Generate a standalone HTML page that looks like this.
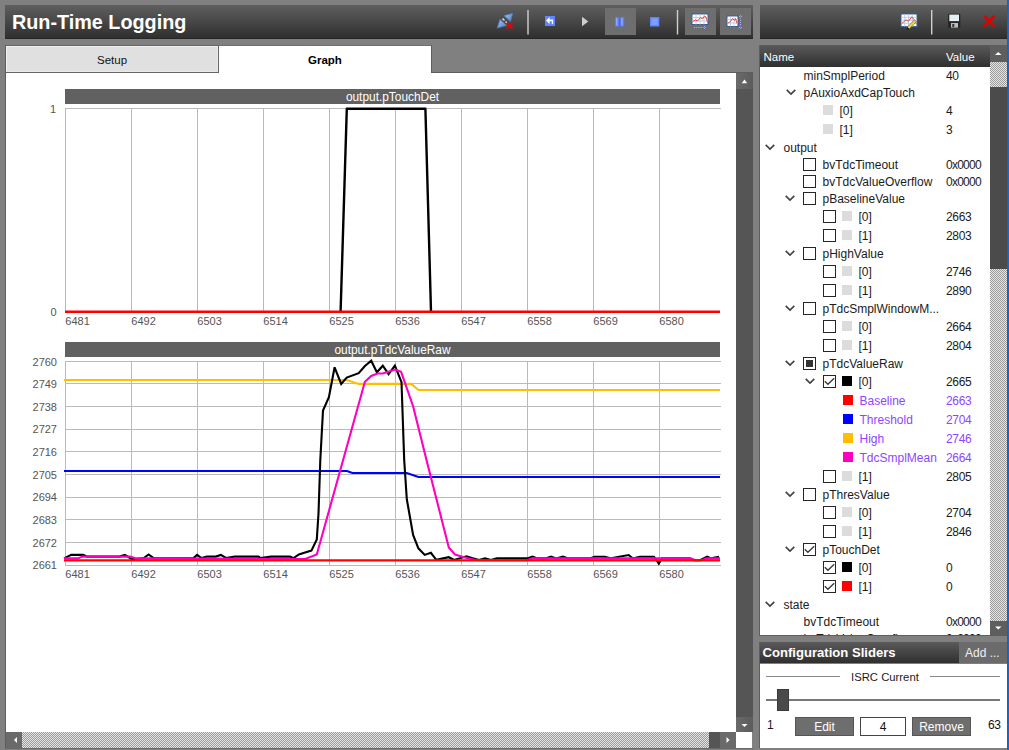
<!DOCTYPE html>
<html><head><meta charset="utf-8">
<style>
*{margin:0;padding:0;box-sizing:border-box}
html,body{width:1009px;height:750px;overflow:hidden;background:#808080;font-family:"Liberation Sans",sans-serif;position:relative}
.a{position:absolute}
.tb{background:linear-gradient(#5f5f5f,#2f2f2f);border-bottom:1px solid #262626}
.t{position:absolute;white-space:nowrap;line-height:1}
.title{left:12px;top:13px;color:#fff;font-weight:bold;font-size:19.8px}
.sep{position:absolute;width:2px;background:#cfcfcf}
.btnbg{position:absolute;background:#6e6e6e}
.tab{position:absolute;top:45px;height:28px;font-size:11.5px;text-align:center;line-height:27px;color:#111}
.lbl{position:absolute;font-size:11px;color:#555;white-space:nowrap;line-height:1}
.hdr{position:absolute;background:#616161;color:#fff;font-size:12.3px;text-align:center;line-height:15px;height:15px}
.r{position:absolute;font-size:12px;color:#1b1b1b;white-space:nowrap;line-height:1}
.v{letter-spacing:-0.35px}
.cb{position:absolute;width:13px;height:13px;border:1px solid #262626;background:#fff}
.sq{position:absolute;width:10px;height:10px;background:#dcdcdc}
.chev{position:absolute;width:11px;height:7px}
.checker{background-color:#c0c0c0;background-image:repeating-conic-gradient(#9a9a9a 0 25%,#e6e6e6 0 50%);background-size:2px 2px}
.pur{color:#8f45ff}
</style></head><body>
<div class="a tb" style="left:5px;top:5px;width:748px;height:34px"></div>
<div class="t title">Run-Time Logging</div>
<div class="a tb" style="left:760px;top:5px;width:247px;height:34px"></div>
<div class="a" style="left:1007px;top:0;width:2px;height:750px;background:linear-gradient(90deg,#2a5a9a,#1a6ad0)"></div>

<svg class="a" style="left:0;top:0" width="1009" height="45" viewBox="0 0 1009 45">
 <defs>
  <linearGradient id="plug" x1="0" y1="0" x2="1" y2="1"><stop offset="0" stop-color="#a8c8ee"/><stop offset="1" stop-color="#4f7fc0"/></linearGradient>
 </defs>
 <!-- disconnect plug -->
 <g>
  <path d="M504 15.6 L512.6 13.4 L510.4 21.6 z" fill="url(#plug)" stroke="#4d7cc2" stroke-width="0.9" stroke-linejoin="round"/>
  <path d="M500 19.4 L506.6 25.4 L497.2 28 z" fill="url(#plug)" stroke="#4d7cc2" stroke-width="0.9" stroke-linejoin="round"/>
  <path d="M502.5 18.5 L504.5 20.5 M505.5 21.5 L507.3 23.3" stroke="#d8d8d8" stroke-width="1.6"/>
  <path d="M506.6 22.8 L512.6 28.6 M512.6 22.8 L506.6 28.6" stroke="#e8000c" stroke-width="2.1"/>
 </g>
 <rect x="527.3" y="10" width="1.4" height="24.5" fill="#d0d0d0"/>
 <!-- back icon -->
 <rect x="545" y="16" width="10" height="10" fill="#5f86ff"/>
 <path d="M546 20.4 L549.6 17 V19.6 H553.1 V23.9 H551.8 V21.3 H549.6 V23.9 z" fill="#fff"/>
 <!-- play -->
 <path d="M582 16.8 L588.3 21.5 L582 26.3 z" fill="#cfcfcf"/>
 <!-- pause -->
 <rect x="605" y="8" width="31" height="27" fill="#6e6e6e"/>
 <rect x="615" y="17" width="4" height="9.5" fill="#5a7cff"/>
 <rect x="620.2" y="17" width="4" height="9.5" fill="#5a7cff"/>
 <rect x="616" y="18" width="1.5" height="7.5" fill="#8fa8ff"/>
 <rect x="621.2" y="18" width="1.5" height="7.5" fill="#8fa8ff"/>
 <!-- stop -->
 <rect x="650" y="17" width="9.3" height="9.5" fill="#5f86ff"/>
 <rect x="651.5" y="18.5" width="6.3" height="6.5" fill="#7f9fff"/>
 <rect x="676.8" y="10" width="1.4" height="24.5" fill="#d0d0d0"/>
 <!-- chart btn 1 -->
 <rect x="685" y="8" width="31" height="27" fill="#6e6e6e"/>
 <rect x="692" y="14" width="16" height="10.5" fill="#fff" stroke="#3a5c8c" stroke-width="1"/>
 <path d="M696 14v10.5 M700 14v10.5 M704 14v10.5 M692 17.5h16 M692 21h16" stroke="#b8c8e4" stroke-width="0.9"/>
 <path d="M692.5 21.5 l3 -1.5 l2 1 l3 -3.5 l2 1.5 l2 -3 l1.5 1 l1.5 5.5" fill="none" stroke="#e04848" stroke-width="1"/>
 <path d="M694 27.5 h9.5" stroke="#b0b0ff" stroke-width="1.1" stroke-dasharray="1.1,1.1"/>
 <path d="M704 26 l1.5 1.5 l-1.5 1.5" fill="none" stroke="#b0b0ff" stroke-width="0.9"/>
 <!-- chart btn 2 -->
 <rect x="720" y="8" width="31" height="27" fill="#6e6e6e"/>
 <rect x="727" y="16" width="11" height="10.5" fill="#fff" stroke="#3a5c8c" stroke-width="1"/>
 <path d="M730.5 16v10.5 M734 16v10.5 M727 19.5h11 M727 23h11" stroke="#b8c8e4" stroke-width="0.9"/>
 <path d="M727.5 23.5 l3 -2 l2 -3 l2 2 l1 -2 l1.5 5" fill="none" stroke="#e04848" stroke-width="1"/>
 <path d="M740.5 17.5 v9" stroke="#b0b0ff" stroke-width="1.1" stroke-dasharray="1.1,1.1"/>
 <path d="M739 17 l1.5 -1.5 l1.5 1.5 M739 27 l1.5 1.5 l1.5 -1.5" fill="none" stroke="#b0b0ff" stroke-width="0.9"/>
 <!-- right panel icons -->
 <rect x="901" y="14" width="16" height="12.6" fill="#ffffff" stroke="#3a5c8c" stroke-width="1"/>
 <path d="M904.8 14v12.6 M908.5 14v12.6 M912.3 14v12.6 M901 17.3h16 M901 20.3h16 M901 23.3h16" stroke="#b8c8e4" stroke-width="0.9"/>
 <path d="M901.5 23.8 l4.5 -4 l2.5 1.5 l3.2 -4.5 l2.5 3 l2.3 4" fill="none" stroke="#e04848" stroke-width="1"/>
 <path d="M907.3 27.2 l7.2 -7.4 l1.9 1.9 l-7.2 7.4 z" fill="#ecd250" stroke="#6a5a18" stroke-width="0.6"/>
 <path d="M907.3 27.2 l1.9 1.9 l-2.4 0.6 z" fill="#111"/>
 <rect x="931" y="10" width="1.4" height="24.5" fill="#d0d0d0"/>
 <!-- save -->
 <rect x="948" y="13.8" width="12.3" height="14" rx="1" fill="#262626"/>
 <rect x="949.3" y="14.6" width="9.7" height="6.5" fill="#e2f2f2"/>
 <rect x="951" y="23" width="7" height="4.6" fill="#bdbdbd"/>
 <rect x="952.3" y="24" width="2" height="3" fill="#333"/>
 <!-- red x -->
 <path d="M984 16 L994.5 26.5 M994.5 16 L984 26.5" stroke="#e00000" stroke-width="2.6"/>
</svg>

<div class="a" style="left:5px;top:45px;width:214px;height:28px;background:#e0e0e0;border:1px solid #666;box-shadow:inset 1px 1px 0 #f0f0f0,inset -1px -1px 0 #eaeaea"></div>
<div class="t" style="left:97px;top:54.5px;font-size:11.5px;color:#111">Setup</div>
<div class="a" style="left:219px;top:45px;width:212px;height:28px;background:#fff;border-top:1px solid #707070"></div>
<div class="t" style="left:308px;top:54.5px;font-size:11.5px;font-weight:bold;color:#000">Graph</div>
<div class="a" style="left:6px;top:73px;width:730px;height:659px;background:#fff"></div>
<div class="a" style="left:5px;top:45px;width:1px;height:703px;background:#5e5e5e"></div>
<div class="a" style="left:5px;top:748px;width:748px;height:1px;background:#6a6a6a"></div>
<div class="a" style="left:431px;top:72px;width:322px;height:1px;background:#5e5e5e"></div>
<div class="a" style="left:431px;top:45px;width:1px;height:28px;background:#5e5e5e"></div>
<div class="a" style="left:736px;top:73px;width:16.5px;height:659px;background:#555"></div>
<div class="a" style="left:736px;top:73px;width:16.5px;height:16px;background:linear-gradient(90deg,#6a6a6a,#5c5c5c)"></div>
<div class="a" style="left:736px;top:717px;width:16.5px;height:15px;background:linear-gradient(90deg,#6a6a6a,#5c5c5c)"></div>
<svg class="a" style="left:736px;top:73px" width="17" height="659"><path d="M5.7 10.2 L8.45 6.6 L11.2 10.2 z" fill="#fff"/><path d="M5.5 651 L8.5 654 L11.5 651 z" fill="#fff"/></svg>
<div class="a checker" style="left:6px;top:732px;width:730px;height:16px"></div>
<div class="a" style="left:6px;top:732px;width:16px;height:16px;background:#6a6a6a"></div>
<div class="a" style="left:709px;top:732px;width:11px;height:16px;background:#555"></div>
<div class="a" style="left:720px;top:732px;width:16px;height:16px;background:#6a6a6a"></div>
<div class="a" style="left:736px;top:732px;width:16px;height:16px;background:#fff"></div>
<svg class="a" style="left:6px;top:732px" width="730" height="16"><path d="M11 5 L8 8 L11 11 z" fill="#fff"/><path d="M720.5 5 L723.5 8 L720.5 11 z" fill="#fff"/></svg>
<svg class="a" style="left:0;top:0" width="736" height="732" viewBox="0 0 736 732">
<rect x="65" y="89" width="655" height="15" fill="#616161"/>
<path d="M65 108.5 H721" stroke="#bababa" stroke-width="1"/>
<path d="M65.5 108 V312" stroke="#bababa" stroke-width="1"/>
<path d="M131.5 108 V312" stroke="#bababa" stroke-width="1"/>
<path d="M197.5 108 V312" stroke="#bababa" stroke-width="1"/>
<path d="M263.5 108 V312" stroke="#bababa" stroke-width="1"/>
<path d="M329.5 108 V312" stroke="#bababa" stroke-width="1"/>
<path d="M395.5 108 V312" stroke="#bababa" stroke-width="1"/>
<path d="M461.5 108 V312" stroke="#bababa" stroke-width="1"/>
<path d="M527.5 108 V312" stroke="#bababa" stroke-width="1"/>
<path d="M593.5 108 V312" stroke="#bababa" stroke-width="1"/>
<path d="M659.5 108 V312" stroke="#bababa" stroke-width="1"/>
<rect x="65" y="342" width="655" height="15" fill="#616161"/>
<path d="M65 361.5 H721" stroke="#bababa" stroke-width="1"/>
<path d="M65 383.5 H721" stroke="#bababa" stroke-width="1"/>
<path d="M65 406.5 H721" stroke="#bababa" stroke-width="1"/>
<path d="M65 429.5 H721" stroke="#bababa" stroke-width="1"/>
<path d="M65 451.5 H721" stroke="#bababa" stroke-width="1"/>
<path d="M65 474.5 H721" stroke="#bababa" stroke-width="1"/>
<path d="M65 497.5 H721" stroke="#bababa" stroke-width="1"/>
<path d="M65 519.5 H721" stroke="#bababa" stroke-width="1"/>
<path d="M65 542.5 H721" stroke="#bababa" stroke-width="1"/>
<path d="M65 565.5 H721" stroke="#bababa" stroke-width="1"/>
<path d="M65.5 361 V566" stroke="#bababa" stroke-width="1"/>
<path d="M131.5 361 V566" stroke="#bababa" stroke-width="1"/>
<path d="M197.5 361 V566" stroke="#bababa" stroke-width="1"/>
<path d="M263.5 361 V566" stroke="#bababa" stroke-width="1"/>
<path d="M329.5 361 V566" stroke="#bababa" stroke-width="1"/>
<path d="M395.5 361 V566" stroke="#bababa" stroke-width="1"/>
<path d="M461.5 361 V566" stroke="#bababa" stroke-width="1"/>
<path d="M527.5 361 V566" stroke="#bababa" stroke-width="1"/>
<path d="M593.5 361 V566" stroke="#bababa" stroke-width="1"/>
<path d="M659.5 361 V566" stroke="#bababa" stroke-width="1"/>
<polyline points="340.6,311.5 346.8,108.8 425.4,108.8 431,311.5" fill="none" stroke="#000" stroke-width="2.4" stroke-linejoin="round"/>
<path d="M65 311.8 H720" stroke="#ff0000" stroke-width="2.6"/>
<polyline points="64.0,380.0 347.0,380.0 358.7,383.9 411.3,383.9 418.4,390.0 720.0,390.0" fill="none" stroke="#ffbf00" stroke-width="2.1" stroke-linejoin="miter" stroke-miterlimit="3"/>
<polyline points="64.0,471.0 347.0,471.0 352.4,473.0 406.8,473.0 418.4,477.0 720.0,477.0" fill="none" stroke="#0000ff" stroke-width="2.1" stroke-linejoin="miter" stroke-miterlimit="3"/>
<polyline points="64.0,558.4 71.3,554.9 83.2,554.9 87.3,556.6 119.5,556.6 124.8,554.9 127.8,556.6 131.3,559.0 136.1,559.0 143.8,558.0 148.6,554.5 154.0,558.4 193.2,558.4 197.1,554.9 201.5,558.0 206.9,556.6 215.8,556.6 220.9,554.9 225.9,558.0 234.8,556.6 258.6,556.6 260.4,558.0 271.0,556.6 290.0,556.6 293.6,558.1 298.9,554.5 304.3,552.8 311.4,550.6 316.8,539.4 318.5,513.5 320.3,460.0 323.0,410.6 328.9,397.3 334.6,367.3 341.2,383.9 346.7,377.6 358.7,373.2 364.9,366.0 371.2,360.7 376.9,372.3 382.8,365.7 388.6,374.1 394.9,365.7 401.5,382.1 404.2,460.0 406.8,499.2 413.1,534.9 418.4,548.3 424.7,554.9 430.9,552.8 436.3,559.9 448.8,557.2 454.1,559.9 466.5,556.3 471.9,558.0 479.0,560.0 485.0,558.4 490.9,560.0 496.9,558.4 527.2,558.4 532.5,556.6 537.3,558.4 545.6,558.4 551.0,556.6 556.3,558.4 562.9,556.6 568.2,558.4 590.0,558.4 594.6,556.7 604.9,556.7 611.2,558.4 619.2,556.7 628.7,555.0 632.6,558.4 639.8,556.7 654.0,556.7 658.8,563.5 662.0,558.4 690.0,558.4 693.7,560.3 700.0,560.3 707.2,556.7 711.1,558.4 719.0,556.7" fill="none" stroke="#000000" stroke-width="2.1" stroke-linejoin="miter" stroke-miterlimit="3"/>
<polyline points="64.0,558.4 77.8,558.4 82.6,556.6 130.2,556.6 136.1,558.4 305.2,559.0 316.8,554.5 364.9,381.8 371.2,375.9 377.4,373.5 382.8,373.5 395.2,369.6 401.1,371.8 413.1,406.2 426.5,460.0 448.8,547.4 455.0,554.5 466.6,558.1 476.6,560.2 526.6,560.2 532.5,558.4 690.5,558.4 695.3,560.3 701.6,560.3 706.4,558.4 720.0,558.4" fill="none" stroke="#ff00c0" stroke-width="2.1" stroke-linejoin="miter" stroke-miterlimit="3"/>
<path d="M64 560.3 H720" stroke="#ff0000" stroke-width="2.3"/>
</svg>
<div class="t" style="left:65px;top:90px;width:655px;height:15px;line-height:15px;text-align:center;color:#fff;font-size:11.9px">output.pTouchDet</div>
<div class="t" style="left:65px;top:343px;width:655px;height:15px;line-height:15px;text-align:center;color:#fff;font-size:11.9px">output.pTdcValueRaw</div>
<div class="lbl" style="left:65.3px;top:316px">6481</div>
<div class="lbl" style="left:65.3px;top:568.8px">6481</div>
<div class="lbl" style="left:131.3px;top:316px">6492</div>
<div class="lbl" style="left:131.3px;top:568.8px">6492</div>
<div class="lbl" style="left:197.3px;top:316px">6503</div>
<div class="lbl" style="left:197.3px;top:568.8px">6503</div>
<div class="lbl" style="left:263.3px;top:316px">6514</div>
<div class="lbl" style="left:263.3px;top:568.8px">6514</div>
<div class="lbl" style="left:329.3px;top:316px">6525</div>
<div class="lbl" style="left:329.3px;top:568.8px">6525</div>
<div class="lbl" style="left:395.3px;top:316px">6536</div>
<div class="lbl" style="left:395.3px;top:568.8px">6536</div>
<div class="lbl" style="left:461.3px;top:316px">6547</div>
<div class="lbl" style="left:461.3px;top:568.8px">6547</div>
<div class="lbl" style="left:527.3px;top:316px">6558</div>
<div class="lbl" style="left:527.3px;top:568.8px">6558</div>
<div class="lbl" style="left:593.3px;top:316px">6569</div>
<div class="lbl" style="left:593.3px;top:568.8px">6569</div>
<div class="lbl" style="left:659.3px;top:316px">6580</div>
<div class="lbl" style="left:659.3px;top:568.8px">6580</div>
<div class="lbl" style="left:20px;width:36px;text-align:right;top:103.5px">1</div>
<div class="lbl" style="left:20px;width:36.5px;text-align:right;top:307px">0</div>
<div class="lbl" style="left:20px;width:37px;text-align:right;top:356.5px">2760</div>
<div class="lbl" style="left:20px;width:37px;text-align:right;top:379.1px">2749</div>
<div class="lbl" style="left:20px;width:37px;text-align:right;top:401.8px">2738</div>
<div class="lbl" style="left:20px;width:37px;text-align:right;top:424.4px">2727</div>
<div class="lbl" style="left:20px;width:37px;text-align:right;top:447.1px">2716</div>
<div class="lbl" style="left:20px;width:37px;text-align:right;top:469.7px">2705</div>
<div class="lbl" style="left:20px;width:37px;text-align:right;top:492.3px">2694</div>
<div class="lbl" style="left:20px;width:37px;text-align:right;top:515.0px">2683</div>
<div class="lbl" style="left:20px;width:37px;text-align:right;top:537.6px">2672</div>
<div class="lbl" style="left:20px;width:37px;text-align:right;top:560.3px">2661</div>
<div class="a" style="left:760px;top:45px;width:230px;height:21.5px;background:linear-gradient(#5a5a5a,#2f2f2f)"></div>
<div class="t" style="left:763.5px;top:51.5px;color:#fff;font-size:11.5px">Name</div>
<div class="t" style="left:946px;top:51.5px;color:#fff;font-size:11.5px">Value</div>
<div class="a" style="left:760px;top:66.5px;width:230px;height:568px;background:#fff;overflow:hidden" id="treebody">
<div class="r" style="left:43.5px;top:3.34px">minSmplPeriod</div>
<div class="r" style="left:186px;top:3.34px;letter-spacing:-0.35px">40</div>
<svg class="a" style="left:25.5px;top:22.5px" width="11" height="7"><path d="M0.7 0.9 L5 5.1 L9.3 0.9" fill="none" stroke="#404040" stroke-width="1.55"/></svg>
<div class="r" style="left:43.5px;top:20.34px">pAuxioAxdCapTouch</div>
<div class="sq" style="left:63px;top:38.5px;background:#dcdcdc"></div>
<div class="r" style="left:79.5px;top:38.34px">[0]</div>
<div class="r" style="left:186px;top:38.34px;letter-spacing:-0.35px">4</div>
<div class="sq" style="left:63px;top:57.5px;background:#dcdcdc"></div>
<div class="r" style="left:79.5px;top:57.34px">[1]</div>
<div class="r" style="left:186px;top:57.34px;letter-spacing:-0.35px">3</div>
<svg class="a" style="left:5px;top:77.5px" width="11" height="7"><path d="M0.7 0.9 L5 5.1 L9.3 0.9" fill="none" stroke="#404040" stroke-width="1.55"/></svg>
<div class="r" style="left:23.5px;top:75.34px">output</div>
<div class="cb" style="left:43px;top:91.5px"></div>
<div class="r" style="left:62.5px;top:92.34px">bvTdcTimeout</div>
<div class="r" style="left:186px;top:92.34px;letter-spacing:-0.75px">0x0000</div>
<div class="cb" style="left:43px;top:108.5px"></div>
<div class="r" style="left:62.5px;top:109.34px">bvTdcValueOverflow</div>
<div class="r" style="left:186px;top:109.34px;letter-spacing:-0.75px">0x0000</div>
<svg class="a" style="left:25px;top:128.5px" width="11" height="7"><path d="M0.7 0.9 L5 5.1 L9.3 0.9" fill="none" stroke="#404040" stroke-width="1.55"/></svg>
<div class="cb" style="left:43px;top:125.5px"></div>
<div class="r" style="left:62.5px;top:126.34px">pBaselineValue</div>
<div class="cb" style="left:63px;top:143.5px"></div>
<div class="sq" style="left:82px;top:144.5px;background:#dcdcdc"></div>
<div class="r" style="left:98.5px;top:144.34px">[0]</div>
<div class="r" style="left:186px;top:144.34px;letter-spacing:-0.35px">2663</div>
<div class="cb" style="left:63px;top:162.5px"></div>
<div class="sq" style="left:82px;top:163.5px;background:#dcdcdc"></div>
<div class="r" style="left:98.5px;top:163.34px">[1]</div>
<div class="r" style="left:186px;top:163.34px;letter-spacing:-0.35px">2803</div>
<svg class="a" style="left:25px;top:183.5px" width="11" height="7"><path d="M0.7 0.9 L5 5.1 L9.3 0.9" fill="none" stroke="#404040" stroke-width="1.55"/></svg>
<div class="cb" style="left:43px;top:180.5px"></div>
<div class="r" style="left:62.5px;top:181.34px">pHighValue</div>
<div class="cb" style="left:63px;top:198.5px"></div>
<div class="sq" style="left:82px;top:199.5px;background:#dcdcdc"></div>
<div class="r" style="left:98.5px;top:199.34px">[0]</div>
<div class="r" style="left:186px;top:199.34px;letter-spacing:-0.35px">2746</div>
<div class="cb" style="left:63px;top:217.5px"></div>
<div class="sq" style="left:82px;top:218.5px;background:#dcdcdc"></div>
<div class="r" style="left:98.5px;top:218.34px">[1]</div>
<div class="r" style="left:186px;top:218.34px;letter-spacing:-0.35px">2890</div>
<svg class="a" style="left:25px;top:238.5px" width="11" height="7"><path d="M0.7 0.9 L5 5.1 L9.3 0.9" fill="none" stroke="#404040" stroke-width="1.55"/></svg>
<div class="cb" style="left:43px;top:235.5px"></div>
<div class="r" style="left:62.5px;top:236.34px">pTdcSmplWindowM...</div>
<div class="cb" style="left:63px;top:253.5px"></div>
<div class="sq" style="left:82px;top:254.5px;background:#dcdcdc"></div>
<div class="r" style="left:98.5px;top:254.34px">[0]</div>
<div class="r" style="left:186px;top:254.34px;letter-spacing:-0.35px">2664</div>
<div class="cb" style="left:63px;top:272.5px"></div>
<div class="sq" style="left:82px;top:273.5px;background:#dcdcdc"></div>
<div class="r" style="left:98.5px;top:273.34px">[1]</div>
<div class="r" style="left:186px;top:273.34px;letter-spacing:-0.35px">2804</div>
<svg class="a" style="left:25px;top:293.5px" width="11" height="7"><path d="M0.7 0.9 L5 5.1 L9.3 0.9" fill="none" stroke="#404040" stroke-width="1.55"/></svg>
<div class="cb" style="left:43px;top:290.5px"></div>
<div class="a" style="left:46px;top:293.5px;width:7px;height:7px;background:#333"></div>
<div class="r" style="left:62.5px;top:291.34px">pTdcValueRaw</div>
<svg class="a" style="left:45px;top:311.5px" width="11" height="7"><path d="M0.7 0.9 L5 5.1 L9.3 0.9" fill="none" stroke="#404040" stroke-width="1.55"/></svg>
<div class="cb" style="left:63px;top:308.5px"></div>
<svg class="a" style="left:63px;top:308.5px" width="13" height="13"><path d="M1.8 6.2 L4.9 9.3 L11.2 3.2" fill="none" stroke="#3a3a3a" stroke-width="1.35"/></svg>
<div class="sq" style="left:82px;top:309.5px;background:#000000"></div>
<div class="r" style="left:98.5px;top:309.34px">[0]</div>
<div class="r" style="left:186px;top:309.34px;letter-spacing:-0.35px">2665</div>
<div class="sq" style="left:83px;top:328.5px;background:#ff0000"></div>
<div class="r pur" style="left:99.5px;top:328.34px">Baseline</div>
<div class="r pur" style="left:186px;top:328.34px;letter-spacing:-0.35px">2663</div>
<div class="sq" style="left:83px;top:347.5px;background:#0000ff"></div>
<div class="r pur" style="left:99.5px;top:347.34px">Threshold</div>
<div class="r pur" style="left:186px;top:347.34px;letter-spacing:-0.35px">2704</div>
<div class="sq" style="left:83px;top:366.5px;background:#ffbf00"></div>
<div class="r pur" style="left:99.5px;top:366.34px">High</div>
<div class="r pur" style="left:186px;top:366.34px;letter-spacing:-0.35px">2746</div>
<div class="sq" style="left:83px;top:385.5px;background:#ff00c0"></div>
<div class="r pur" style="left:99.5px;top:385.34px">TdcSmplMean</div>
<div class="r pur" style="left:186px;top:385.34px;letter-spacing:-0.35px">2664</div>
<div class="cb" style="left:63px;top:403.5px"></div>
<div class="sq" style="left:82px;top:404.5px;background:#dcdcdc"></div>
<div class="r" style="left:98.5px;top:404.34px">[1]</div>
<div class="r" style="left:186px;top:404.34px;letter-spacing:-0.35px">2805</div>
<svg class="a" style="left:25px;top:424.5px" width="11" height="7"><path d="M0.7 0.9 L5 5.1 L9.3 0.9" fill="none" stroke="#404040" stroke-width="1.55"/></svg>
<div class="cb" style="left:43px;top:421.5px"></div>
<div class="r" style="left:62.5px;top:422.34px">pThresValue</div>
<div class="cb" style="left:63px;top:439.5px"></div>
<div class="sq" style="left:82px;top:440.5px;background:#dcdcdc"></div>
<div class="r" style="left:98.5px;top:440.34px">[0]</div>
<div class="r" style="left:186px;top:440.34px;letter-spacing:-0.35px">2704</div>
<div class="cb" style="left:63px;top:458.5px"></div>
<div class="sq" style="left:82px;top:459.5px;background:#dcdcdc"></div>
<div class="r" style="left:98.5px;top:459.34px">[1]</div>
<div class="r" style="left:186px;top:459.34px;letter-spacing:-0.35px">2846</div>
<svg class="a" style="left:25px;top:479.5px" width="11" height="7"><path d="M0.7 0.9 L5 5.1 L9.3 0.9" fill="none" stroke="#404040" stroke-width="1.55"/></svg>
<div class="cb" style="left:43px;top:476.5px"></div>
<svg class="a" style="left:43px;top:476.5px" width="13" height="13"><path d="M1.8 6.2 L4.9 9.3 L11.2 3.2" fill="none" stroke="#3a3a3a" stroke-width="1.35"/></svg>
<div class="r" style="left:62.5px;top:477.34px">pTouchDet</div>
<div class="cb" style="left:63px;top:494.5px"></div>
<svg class="a" style="left:63px;top:494.5px" width="13" height="13"><path d="M1.8 6.2 L4.9 9.3 L11.2 3.2" fill="none" stroke="#3a3a3a" stroke-width="1.35"/></svg>
<div class="sq" style="left:82px;top:495.5px;background:#000000"></div>
<div class="r" style="left:98.5px;top:495.34px">[0]</div>
<div class="r" style="left:186px;top:495.34px;letter-spacing:-0.35px">0</div>
<div class="cb" style="left:63px;top:513.5px"></div>
<svg class="a" style="left:63px;top:513.5px" width="13" height="13"><path d="M1.8 6.2 L4.9 9.3 L11.2 3.2" fill="none" stroke="#3a3a3a" stroke-width="1.35"/></svg>
<div class="sq" style="left:82px;top:514.5px;background:#ff0000"></div>
<div class="r" style="left:98.5px;top:514.34px">[1]</div>
<div class="r" style="left:186px;top:514.34px;letter-spacing:-0.35px">0</div>
<svg class="a" style="left:5px;top:534.5px" width="11" height="7"><path d="M0.7 0.9 L5 5.1 L9.3 0.9" fill="none" stroke="#404040" stroke-width="1.55"/></svg>
<div class="r" style="left:23.5px;top:532.34px">state</div>
<div class="r" style="left:43.5px;top:549.34px">bvTdcTimeout</div>
<div class="r" style="left:186px;top:549.34px;letter-spacing:-0.75px">0x0000</div>
<div class="r" style="left:43.5px;top:566.34px">bvTdcValueOverflow</div>
<div class="r" style="left:186px;top:566.34px;letter-spacing:-0.75px">0x0000</div>
</div>
<div class="a checker" style="left:990px;top:45px;width:16.5px;height:589.5px"></div>
<div class="a" style="left:990px;top:45px;width:16.5px;height:17px;background:#5e5e5e"></div>
<div class="a" style="left:990px;top:87px;width:16.5px;height:182px;background:#4b4b4b"></div>
<div class="a" style="left:990px;top:621px;width:16.5px;height:13.5px;background:#5e5e5e"></div>
<svg class="a" style="left:990px;top:45px" width="17" height="590"><path d="M5 10 L8.25 7 L11.5 10 z" fill="#fff"/><path d="M5 581.5 L8.25 584.5 L11.5 581.5 z" fill="#fff"/></svg>
<div class="a" style="left:759px;top:45px;width:1px;height:591px;background:#5e5e5e"></div>
<div class="a" style="left:759px;top:635px;width:248px;height:1px;background:#5e5e5e"></div>
<div class="a" style="left:759px;top:642px;width:1px;height:106px;background:#5e5e5e"></div>
<div class="a" style="left:760px;top:642px;width:199px;height:21px;background:linear-gradient(#5a5a5a,#2f2f2f)"></div>
<div class="a" style="left:959px;top:642px;width:47.5px;height:21px;background:#6b6b6b"></div>
<div class="t" style="left:762.5px;top:646px;color:#fff;font-size:13.1px;font-weight:bold">Configuration Sliders</div>
<div class="t" style="left:965px;top:647px;color:#f0f0f0;font-size:12px">Add ...</div>
<div class="a" style="left:760px;top:663.5px;width:246.5px;height:84.5px;background:#fff"></div>
<div class="a" style="left:766px;top:676px;width:74px;height:1px;background:#888"></div>
<div class="a" style="left:930px;top:676px;width:70px;height:1px;background:#888"></div>
<div class="t" style="left:851px;top:671.5px;color:#1b1b1b;font-size:11.3px">ISRC Current</div>
<div class="a" style="left:766px;top:699px;width:234px;height:1.5px;background:#777"></div>
<div class="a" style="left:777px;top:688.5px;width:12px;height:22.5px;background:#4a4a4a;border:1px solid #3a3a3a"></div>
<div class="t" style="left:767px;top:719px;color:#1b1b1b;font-size:12px">1</div>
<div class="a" style="left:795px;top:717px;width:59px;height:18.5px;background:#6e6e6e;border:1px solid #555"></div>
<div class="t" style="left:795px;top:721px;width:59px;text-align:center;color:#fff;font-size:12px">Edit</div>
<div class="a" style="left:860px;top:717px;width:46px;height:18.5px;background:#fff;border:1px solid #444"></div>
<div class="t" style="left:860px;top:721px;width:46px;text-align:center;color:#111;font-size:12px">4</div>
<div class="a" style="left:912px;top:717px;width:59px;height:18.5px;background:#6e6e6e;border:1px solid #555"></div>
<div class="t" style="left:912px;top:721px;width:59px;text-align:center;color:#fff;font-size:12px">Remove</div>
<div class="t v" style="left:988px;top:719px;color:#111;font-size:12px">63</div>
</body></html>
